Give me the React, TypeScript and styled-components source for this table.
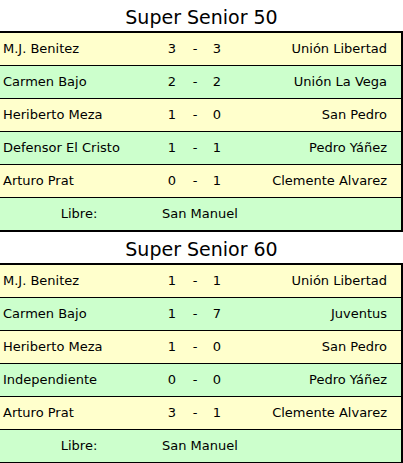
import React from "react";
import styled, { createGlobalStyle } from "styled-components";

const Global = createGlobalStyle`
  html, body { margin: 0; padding: 0; background: #ffffff; }
  body { font-family: "DejaVu Sans", Verdana, sans-serif; color: #000; }
`;

const Page = styled.div`
  width: 403px;
  display: flex;
  flex-direction: column;
`;

const Title = styled.h2`
  margin: 0;
  height: 31px;
  box-sizing: border-box;
  padding-top: 3px;
  line-height: 28px;
  font-size: 19px;
  font-weight: normal;
  text-align: center;
  color: #000;
`;

const Table = styled.div`
  display: flex;
  flex-direction: column;
  border-top: 2px solid #000;
  border-right: 2px solid #000;
  border-bottom: 2px solid #000;
`;

const Row = styled.div<{ $tone: "yellow" | "green" }>`
  display: grid;
  grid-template-columns: 158px 28px 18px 26px 1fr;
  height: 32px;
  align-items: center;
  font-size: 13px;
  line-height: 32px;
  background: ${(p) => (p.$tone === "yellow" ? "#ffffcc" : "#ccffcc")};
  &:not(:last-child) {
    border-bottom: 1px solid #000;
  }
`;

const Home = styled.div`
  padding-left: 3px;
  white-space: nowrap;
`;

const Score = styled.div`
  text-align: center;
`;

const Away = styled.div`
  text-align: right;
  padding-right: 14px;
  white-space: nowrap;
`;

const ByeLabel = styled.div`
  text-align: center;
`;

const ByeTeam = styled.div`
  grid-column: 2 / 6;
  padding-left: 4px;
  white-space: nowrap;
`;

type Match = [string, number, number, string];

const groups: { title: string; matches: Match[]; bye: string }[] = [
  {
    title: "Super Senior 50",
    matches: [
      ["M.J. Benitez", 3, 3, "Unión Libertad"],
      ["Carmen Bajo", 2, 2, "Unión La Vega"],
      ["Heriberto Meza", 1, 0, "San Pedro"],
      ["Defensor El Cristo", 1, 1, "Pedro Yáñez"],
      ["Arturo Prat", 0, 1, "Clemente Alvarez"],
    ],
    bye: "San Manuel",
  },
  {
    title: "Super Senior 60",
    matches: [
      ["M.J. Benitez", 1, 1, "Unión Libertad"],
      ["Carmen Bajo", 1, 7, "Juventus"],
      ["Heriberto Meza", 1, 0, "San Pedro"],
      ["Independiente", 0, 0, "Pedro Yáñez"],
      ["Arturo Prat", 3, 1, "Clemente Alvarez"],
    ],
    bye: "San Manuel",
  },
];

export default function App() {
  return (
    <Page>
      <Global />
      {groups.map((g) => (
        <React.Fragment key={g.title}>
          <Title>{g.title}</Title>
          <Table>
            {g.matches.map((m, i) => (
              <Row key={i} $tone={i % 2 === 0 ? "yellow" : "green"}>
                <Home>{m[0]}</Home>
                <Score>{m[1]}</Score>
                <Score>-</Score>
                <Score>{m[2]}</Score>
                <Away>{m[3]}</Away>
              </Row>
            ))}
            <Row $tone="green">
              <ByeLabel>Libre:</ByeLabel>
              <ByeTeam>{g.bye}</ByeTeam>
            </Row>
          </Table>
        </React.Fragment>
      ))}
    </Page>
  );
}
